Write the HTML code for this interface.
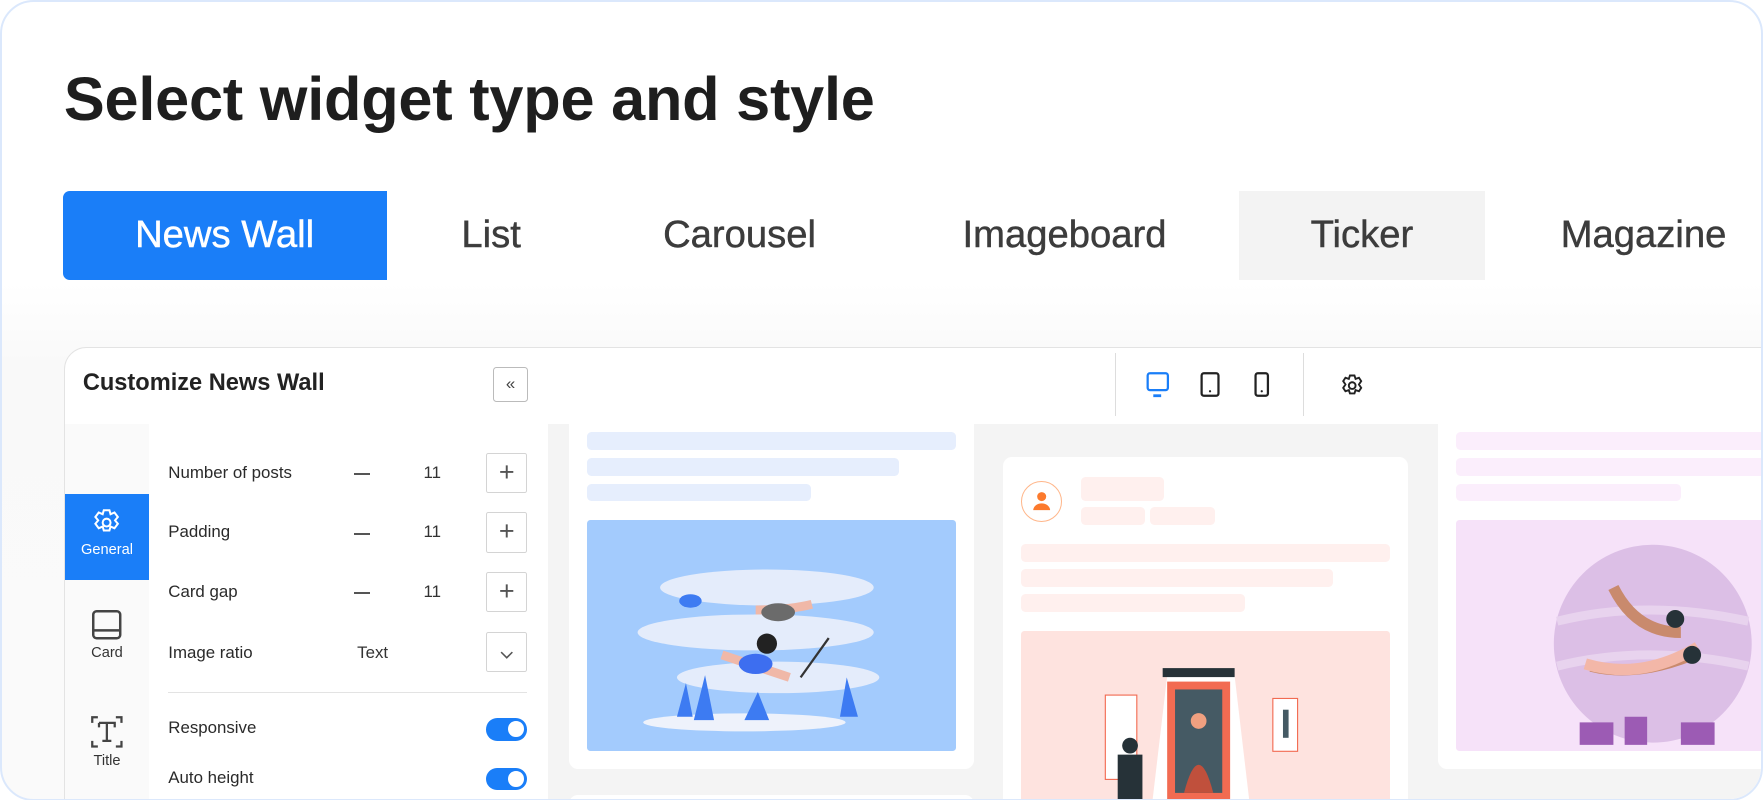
<!DOCTYPE html>
<html><head><meta charset="utf-8"><style>
*{margin:0;padding:0;box-sizing:border-box}
html,body{width:1763px;height:800px;overflow:hidden;background:#fff;font-family:"Liberation Sans",sans-serif}
#w{zoom:1.12436;width:1568px;height:712px;position:relative;overflow:hidden}
.frame{position:absolute;left:0;top:0;width:1568px;height:712px;border:2px solid #dbe8fc;border-radius:30px;overflow:hidden;background:linear-gradient(#fff 0,#fff 250px,#f9f9f9 320px,#fafafa 100%)}
.a{position:absolute}
h1{position:absolute;left:55px;top:55px;font-size:54.5px;font-weight:bold;color:#1e1e1e;letter-spacing:-0.2px;white-space:nowrap}
.tab{position:absolute;top:168px;height:79px;line-height:79px;font-size:34px;color:#3c3c3c;text-align:center;-webkit-text-stroke:0.4px currentColor}
.panel{position:absolute;left:55px;top:307px;width:1540px;height:420px;background:#fff;border:1px solid #e3e3e3;border-radius:20px 0 0 0;overflow:hidden}
.lbl{position:absolute;left:92px;font-size:15px;color:#2a2a2a}
.pm{position:absolute;left:375px;width:36px;height:36px;border:1px solid #d4d4d4;border-radius:2px;text-align:center;line-height:33px;font-size:24px;color:#555}
.minus{position:absolute;left:257px;width:14px;height:2px;background:#555}
.num{position:absolute;left:319px;font-size:15px;color:#333}
.tg{position:absolute;left:375px;width:36px;height:20px;border-radius:10px;background:#1a7ef8}
.tg:after{content:"";position:absolute;right:3px;top:3px;width:14px;height:14px;border-radius:50%;background:#fff}
.bar{position:absolute;border-radius:4px}
.card{position:absolute;background:#fff;border-radius:8px}
</style></head><body><div id="w"><div class="frame">
<h1>Select widget type and style</h1>
<div class="tab" style="left:54px;width:288px;background:#1a7ef8;color:#fff;border-radius:6px 0 0 6px">News Wall</div>
<div class="tab" style="left:360px;width:150px">List</div>
<div class="tab" style="left:540px;width:232px">Carousel</div>
<div class="tab" style="left:800px;width:290px">Imageboard</div>
<div class="tab" style="left:1100px;width:219px;background:#f3f3f3">Ticker</div>
<div class="tab" style="left:1340px;width:240px">Magazine</div>

<div class="panel">
 <div class="a" style="left:16px;top:19px;font-size:21px;font-weight:bold;color:#222">Customize News Wall</div>
 <div class="a" style="left:381px;top:17px;width:31px;height:31px;border:1px solid #bbb;border-radius:3px;text-align:center;line-height:28px;font-size:15px;color:#444">«</div>
 <div class="a" style="left:934px;top:4px;width:1px;height:56px;background:#ddd"></div>
 <div class="a" style="left:1101px;top:4px;width:1px;height:56px;background:#ddd"></div>
 <svg class="a" style="left:958px;top:20px" width="200" height="26" viewBox="0 0 200 26" fill="none" stroke-width="2">
  <rect x="5" y="2" width="18" height="15" rx="2" stroke="#1a7ef8"/><line x1="10" y1="22" x2="17" y2="22" stroke="#1a7ef8" stroke-width="2.5"/>
  <rect x="53" y="2" width="15" height="20" rx="2" stroke="#222"/><circle cx="60.5" cy="18" r="1" fill="#222" stroke="none"/>
  <rect x="101" y="2" width="11" height="20" rx="2" stroke="#222"/><circle cx="106.5" cy="18" r="1" fill="#222" stroke="none"/>
  <g transform="translate(187,13)" stroke="#222" stroke-width="1.7"><path d="M-2-9h4l1 3 3-1 2 3-2 3 2 3-2 3-3-1-1 3h-4l-1-3-3 1-2-3 2-3-2-3 2-3 3 1z"/><circle r="3"/></g>
 </svg>
 <div class="a" style="left:0;top:67px;width:75px;height:360px;background:#fafafa"></div>
 <div class="a" style="left:0;top:130px;width:75px;height:76px;background:#1a7ef8;color:#fff;font-size:13px;text-align:center">
  <svg style="display:block;margin:12px auto 4px" width="26" height="26" viewBox="-13 -13 26 26" fill="none" stroke="#fff" stroke-width="1.8"><path d="M-2.5-11h5l1 3.5 3.5-1.5 3 4-2.5 3 2.5 3-3 4-3.5-1.5-1 3.5h-5l-1-3.5-3.5 1.5-3-4 2.5-3-2.5-3 3-4 3.5 1.5z"/><circle r="3.5"/></svg>General</div>
 <div class="a" style="left:0;top:232px;width:75px;text-align:center;font-size:13px;color:#333">
  <svg style="display:block;margin:0 auto 4px" width="28" height="28" viewBox="0 0 28 28" fill="none" stroke="#444" stroke-width="2.2"><rect x="2" y="2" width="24" height="24" rx="3"/><line x1="2" y1="19" x2="26" y2="19"/></svg>Card</div>
 <div class="a" style="left:0;top:326px;width:75px;text-align:center;font-size:13px;color:#333">
  <svg style="display:block;margin:0 auto 4px" width="30" height="30" viewBox="0 0 30 30" fill="none" stroke="#444" stroke-width="2"><path d="M2 7V2h5M23 2h5v5M2 23v5h5M28 23v5h-5M8 7h14v4M8 7v4M15 7v16M11 23h8"/></svg>Title</div>
 <div class="lbl" style="top:102px">Number of posts</div><div class="minus" style="top:111px"></div><div class="num" style="top:102px">11</div><div class="pm" style="top:93px">+</div>
 <div class="lbl" style="top:155px">Padding</div><div class="minus" style="top:164px"></div><div class="num" style="top:155px">11</div><div class="pm" style="top:146px">+</div>
 <div class="lbl" style="top:208px">Card gap</div><div class="minus" style="top:217px"></div><div class="num" style="top:208px">11</div><div class="pm" style="top:199px">+</div>
 <div class="lbl" style="top:262px">Image ratio</div><div class="num" style="top:262px;left:260px">Text</div><div class="pm" style="top:252px"><svg width="12" height="8" viewBox="0 0 12 8" fill="none" stroke="#555" stroke-width="1.4"><path d="M1 1l5 5 5-5"/></svg></div>
 <div class="a" style="left:92px;top:306px;width:319px;height:1px;background:#e3e3e3"></div>
 <div class="lbl" style="top:329px">Responsive</div><div class="tg" style="top:329px"></div>
 <div class="lbl" style="top:373px">Auto height</div><div class="tg" style="top:373px"></div>

 <div class="a" style="left:430px;top:67px;width:1120px;height:360px;background:#f4f4f4">
  <div class="card" style="left:18px;top:-20px;width:361px;height:327px">
   <div class="bar" style="left:16px;top:28px;width:329px;height:16px;background:#e6eefd"></div>
   <div class="bar" style="left:16px;top:51px;width:278px;height:16px;background:#e6eefd"></div>
   <div class="bar" style="left:16px;top:74px;width:200px;height:15px;background:#e6eefd"></div>
   <div class="bar" style="left:16px;top:106px;width:329px;height:205px;background:#a3cbfd;border-radius:3px">
    <svg width="329" height="205" viewBox="0 0 329 205"><g fill="#e4ecfb"><ellipse cx="160" cy="60" rx="95" ry="16"/><ellipse cx="150" cy="100" rx="105" ry="16"/><ellipse cx="170" cy="140" rx="90" ry="14"/><ellipse cx="140" cy="180" rx="90" ry="8" fill="#eef2fb"/></g>
    <g fill="#3d7bf2"><path d="M80 175l8-30 6 30zM95 178l10-40 8 40zM225 175l6-35 10 35zM140 178l12-25 10 25z"/><ellipse cx="92" cy="72" rx="10" ry="6"/></g>
    <path d="M120 120q30 10 60 20M150 80q30 0 50-5" stroke="#f0b8a8" stroke-width="8" fill="none"/><ellipse cx="170" cy="82" rx="15" ry="8" fill="#6b6b6b"/><ellipse cx="150" cy="128" rx="15" ry="9" fill="#3d6ef0"/><circle cx="160" cy="110" r="9" fill="#222"/><line x1="190" y1="140" x2="215" y2="105" stroke="#333" stroke-width="2"/></svg>
   </div>
  </div>
  <div class="card" style="left:404px;top:30px;width:361px;height:340px">
   <div class="a" style="left:16px;top:21px;width:37px;height:37px;border-radius:50%;border:1px solid #ffb68a;background:#fff">
    <svg width="35" height="35" viewBox="0 0 35 35"><circle cx="17.5" cy="13" r="4" fill="#fc7a2d"/><path d="M10 25a7.5 6 0 0115 0z" fill="#fc7a2d"/></svg></div>
   <div class="bar" style="left:70px;top:18px;width:74px;height:21px;background:#fff0ee"></div>
   <div class="bar" style="left:70px;top:44px;width:57px;height:16px;background:#fff0ee"></div>
   <div class="bar" style="left:131px;top:44px;width:58px;height:16px;background:#fff0ee"></div>
   <div class="bar" style="left:16px;top:77px;width:329px;height:16px;background:#fff0ee"></div>
   <div class="bar" style="left:16px;top:99px;width:278px;height:16px;background:#fff0ee"></div>
   <div class="bar" style="left:16px;top:122px;width:200px;height:16px;background:#fff0ee"></div>
   <div class="bar" style="left:16px;top:155px;width:329px;height:200px;background:#fee3df;border-radius:3px">
    <svg width="329" height="200" viewBox="0 0 329 200"><path d="M130 40h60l20 170h-100z" fill="#fff"/><rect x="126" y="33" width="64" height="8" fill="#263238"/><rect x="130" y="45" width="56" height="108" fill="#f26b52"/><rect x="137" y="52" width="42" height="92" fill="#455a64"/><path d="M145 144q13-50 26 0z" fill="#c0503c"/><circle cx="158" cy="80" r="7" fill="#f0a080"/><rect x="75" y="57" width="28" height="75" fill="#fff" stroke="#f26b52"/><rect x="224" y="60" width="22" height="47" fill="#fff" stroke="#f26b52"/><rect x="233" y="70" width="5" height="25" fill="#455a64"/><path d="M88 150h20l-2 60h-16z" fill="#f26b52"/><path d="M86 110h22v40h-22z" fill="#263238"/><circle cx="97" cy="102" r="7" fill="#263238"/><path d="M210 190q10-30 30-20" fill="#f26b52"/></svg>
   </div>
  </div>
  <div class="card" style="left:791px;top:-20px;width:360px;height:327px">
   <div class="bar" style="left:16px;top:28px;width:330px;height:16px;background:#fbeefc"></div>
   <div class="bar" style="left:16px;top:51px;width:330px;height:16px;background:#fbeefc"></div>
   <div class="bar" style="left:16px;top:74px;width:200px;height:15px;background:#fbeefc"></div>
   <div class="bar" style="left:16px;top:106px;width:330px;height:205px;background:#f6e2f9;border-radius:3px">
    <svg width="330" height="205" viewBox="0 0 330 205"><circle cx="175" cy="110" r="88" fill="#dcbfe6"/><path d="M90 90q80-20 170 0M90 130q80-20 170 0" stroke="#e8d3ee" stroke-width="8" fill="none"/><path d="M140 60q20 40 60 40M120 130q40 10 90-10" stroke="#c98a6d" stroke-width="10" fill="none"/><path d="M115 128q50 15 100-15" stroke="#f3b7a8" stroke-width="10" fill="none"/><circle cx="195" cy="88" r="8" fill="#263238"/><circle cx="210" cy="120" r="8" fill="#263238"/><g fill="#9c5bb4"><rect x="110" y="180" width="30" height="20"/><rect x="150" y="175" width="20" height="25"/><rect x="200" y="180" width="30" height="20"/></g></svg>
   </div>
  </div>
  <div class="card" style="left:18px;top:330px;width:361px;height:40px"></div>
 </div>
</div>
</div></div></body></html>
